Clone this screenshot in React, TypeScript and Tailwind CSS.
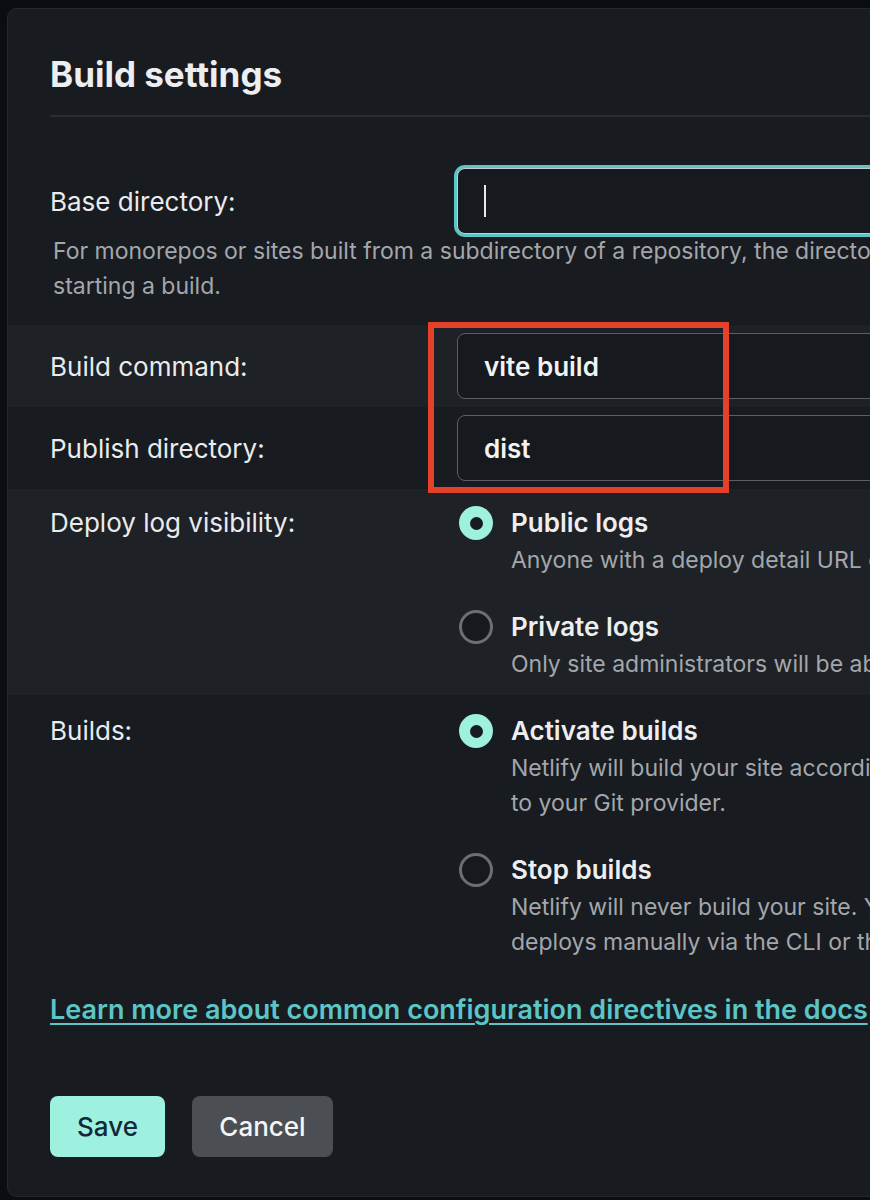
import React from "react";

const font = { fontFamily: "Inter, 'Noto Sans', 'Liberation Sans', sans-serif" };

function Radio({ checked }: { checked: boolean }) {
  return checked ? (
    <div className="w-[34px] h-[34px] rounded-full bg-[#9ef0df] flex items-center justify-center shrink-0">
      <div className="w-[13px] h-[13px] rounded-full bg-[#181b20]" />
    </div>
  ) : (
    <div className="w-[34px] h-[34px] rounded-full border-[3px] border-[#6b6f74] bg-[#16191d] shrink-0" />
  );
}

function Option({
  checked,
  title,
  lines,
}: {
  checked: boolean;
  title: string;
  lines: string[];
}) {
  return (
    <div className="flex gap-[18px]">
      <div className="h-[38px] flex items-center">
        <Radio checked={checked} />
      </div>
      <div className="flex flex-col">
        <div className="text-[26px] leading-[38px] font-semibold text-[#eceef0] whitespace-nowrap">{title}</div>
        <div className="mt-[1px]">
          {lines.map((l, i) => (
            <div key={i} className="text-[23px] leading-[35px] text-[#a3a7ac] whitespace-nowrap">
              {l}
            </div>
          ))}
        </div>
      </div>
    </div>
  );
}

export default function App() {
  return (
    <div className="w-[870px] h-[1200px] bg-[#0b0e11] pt-[8px] pl-[7px] overflow-hidden relative" style={font}>
      <div className="w-[920px] h-[1189px] bg-[#181b20] rounded-[10px] border border-[#25292e] overflow-hidden">
        {/* Title */}
        <div className="px-[42px] pt-[44px]">
          <h1 className="text-[35px] leading-[42px] font-bold text-[#eceef0]">Build settings</h1>
          <div className="mt-[20px] h-[2px] bg-[#2a2e33]" />
        </div>

        {/* Base directory */}
        <div className="px-[42px] pt-[51px] pb-[21px]">
          <div className="flex items-center">
            <div className="w-[407px] text-[26px] text-[#e9ebed] shrink-0">Base directory:</div>
            <div className="flex-1 h-[66px] rounded-[8px] border-[1.5px] border-[#c8ccd0] bg-[#16191d] shadow-[0_0_0_3px_#5cc4c4] flex items-center pl-[26px]">
              <div className="w-[2px] h-[32px] bg-[#e6e8ea]" />
            </div>
          </div>
          <p className="pl-[3px] text-[23px] leading-[35px] text-[#a3a7ac] whitespace-nowrap">
            For monorepos or sites built from a subdirectory of a repository, the directory where Netlify navigates to before
            <br />
            starting a build.
          </p>
        </div>

        {/* Build command */}
        <div className="px-[42px] py-[8px] bg-[#1e2126] flex items-center">
          <div className="w-[407px] text-[26px] text-[#e9ebed] shrink-0">Build command:</div>
          <div className="flex-1 h-[66px] rounded-[8px] border-[1.5px] border-[#5b5f64] bg-[#16191d] flex items-center pl-[26px] text-[26px] font-semibold text-[#f1f2f3]">
            vite build
          </div>
        </div>

        {/* Publish directory */}
        <div className="px-[42px] py-[8px] flex items-center">
          <div className="w-[407px] text-[26px] text-[#e9ebed] shrink-0">Publish directory:</div>
          <div className="flex-1 h-[66px] rounded-[8px] border-[1.5px] border-[#5b5f64] bg-[#16191d] flex items-center pl-[26px] text-[26px] font-semibold text-[#f1f2f3]">
            dist
          </div>
        </div>

        {/* Deploy log visibility */}
        <div className="px-[42px] pt-[15px] pb-[13px] bg-[#1e2126] flex">
          <div className="w-[409px] text-[26px] leading-[38px] text-[#e9ebed] shrink-0">Deploy log visibility:</div>
          <div className="flex flex-col gap-[30px]">
            <Option checked title="Public logs" lines={["Anyone with a deploy detail URL can access the logs."]} />
            <Option checked={false} title="Private logs" lines={["Only site administrators will be able to access the logs."]} />
          </div>
        </div>

        {/* Builds */}
        <div className="px-[42px] pt-[17px] flex">
          <div className="w-[409px] text-[26px] leading-[38px] text-[#e9ebed] shrink-0">Builds:</div>
          <div className="flex flex-col gap-[30px]">
            <Option
              checked
              title="Activate builds"
              lines={[
                "Netlify will build your site according to your build settings when you push",
                "to your Git provider.",
              ]}
            />
            <Option
              checked={false}
              title="Stop builds"
              lines={[
                "Netlify will never build your site. You can still upload",
                "deploys manually via the CLI or the API.",
              ]}
            />
          </div>
        </div>

        {/* Link */}
        <div className="px-[42px] pt-[33px]">
          <a className="text-[27px] leading-[34px] font-semibold text-[#5cc5c5] underline underline-offset-[4px] decoration-[2px] whitespace-nowrap">
            Learn more about common configuration directives in the docs
          </a>
        </div>

        {/* Buttons */}
        <div className="px-[42px] pt-[69px] flex gap-[27px]">
          <button className="w-[115px] h-[61px] rounded-[8px] bg-[#9ef0df] text-[#14283a] text-[26px] font-medium">Save</button>
          <button className="w-[141px] h-[61px] rounded-[8px] bg-[#4b4f54] text-[#f4f5f6] text-[26px] font-medium">Cancel</button>
        </div>
      </div>

      {/* Red annotation */}
      <div className="absolute left-[428px] top-[322px] w-[301px] h-[171px] border-[6px] border-[#e5402a] pointer-events-none" />
    </div>
  );
}
